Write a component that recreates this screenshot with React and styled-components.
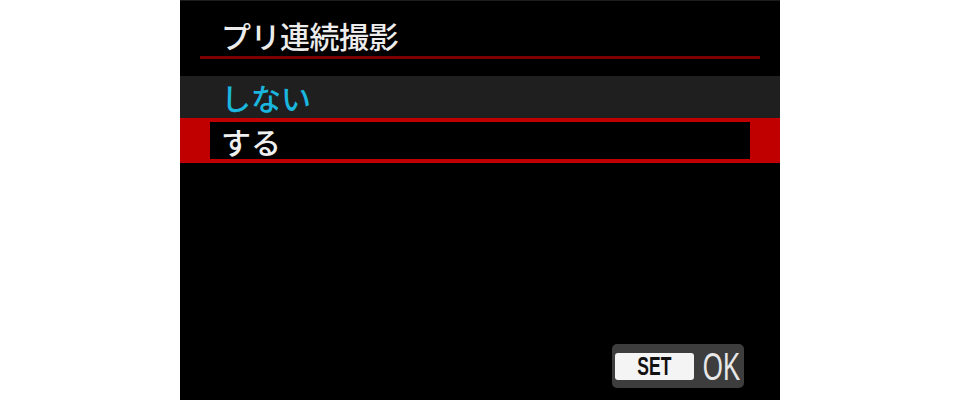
import React from "react";
import styled, { createGlobalStyle } from "styled-components";

const Global = createGlobalStyle`
  html, body { margin: 0; padding: 0; background: #ffffff; }
  body { font-family: "Noto Sans CJK JP", "Noto Sans", sans-serif; }
`;

const Screen = styled.div`
  width: 600px;
  height: 400px;
  margin: 0 auto;
  background: #000;
  border-top: 1px solid #1c1c1c;
  box-sizing: border-box;
  display: flex;
  flex-direction: column;
`;

const Title = styled.div`
  padding: 15px 0 0 41px;
  height: 55px;
  box-sizing: border-box;
  font-size: 30px;
  font-weight: 500;
  line-height: 38px;
  color: #ececec;
  letter-spacing: -0.5px;
`;

const Rule = styled.div`
  margin: 0 20px;
  height: 3px;
  background: #7d0000;
`;

const List = styled.div`
  margin-top: 17px;
  display: flex;
  flex-direction: column;
`;

const Option = styled.div`
  height: 42px;
  display: flex;
  align-items: center;
  padding-left: 41px;
  background: #1f1f1f;
  color: #1ab6de;
  font-size: 30px;
  font-weight: 500;
`;

const Selected = styled.div`
  height: 45px;
  box-sizing: border-box;
  padding: 4px 30px;
  background: #c00000;
  display: flex;
`;

const SelectedInner = styled.div`
  flex: 1;
  background: #000;
  display: flex;
  align-items: center;
  padding-left: 11px;
  color: #f0f0f0;
  font-size: 30px;
  font-weight: 500;
`;

const Footer = styled.div`
  margin-top: auto;
  display: flex;
  justify-content: flex-end;
  padding: 0 36px 12px 0;
`;

const SetButton = styled.div`
  display: flex;
  align-items: center;
  width: 132px;
  height: 44px;
  box-sizing: border-box;
  padding: 0 3px;
  border-radius: 5px;
  background: #3d3d3d;
`;

const SetLabel = styled.div`
  flex: 0 0 79px;
  height: 27px;
  border-radius: 3px;
  background: #f4f4f4;
  display: flex;
  align-items: center;
  justify-content: center;
`;

const SetText = styled.span`
  display: inline-block;
  font-family: "Liberation Sans", Arial, sans-serif;
  font-weight: 700;
  font-size: 25px;
  line-height: 27px;
  color: #111;
  transform: scaleX(0.7);
`;

const OkBox = styled.div`
  flex: 1;
  display: flex;
  justify-content: center;
  align-items: center;
  height: 44px;
`;

const OkText = styled.span`
  display: inline-block;
  font-family: "Liberation Sans", Arial, sans-serif;
  font-size: 38px;
  line-height: 44px;
  color: #e8e8e8;
  transform: scaleX(0.68);
  margin-top: 1px;
`;

export default function App() {
  return (
    <>
      <Global />
      <Screen>
        <Title>プリ連続撮影</Title>
        <Rule />
        <List>
          <Option>しない</Option>
          <Selected>
            <SelectedInner>する</SelectedInner>
          </Selected>
        </List>
        <Footer>
          <SetButton>
            <SetLabel>
              <SetText>SET</SetText>
            </SetLabel>
            <OkBox>
              <OkText>OK</OkText>
            </OkBox>
          </SetButton>
        </Footer>
      </Screen>
    </>
  );
}
